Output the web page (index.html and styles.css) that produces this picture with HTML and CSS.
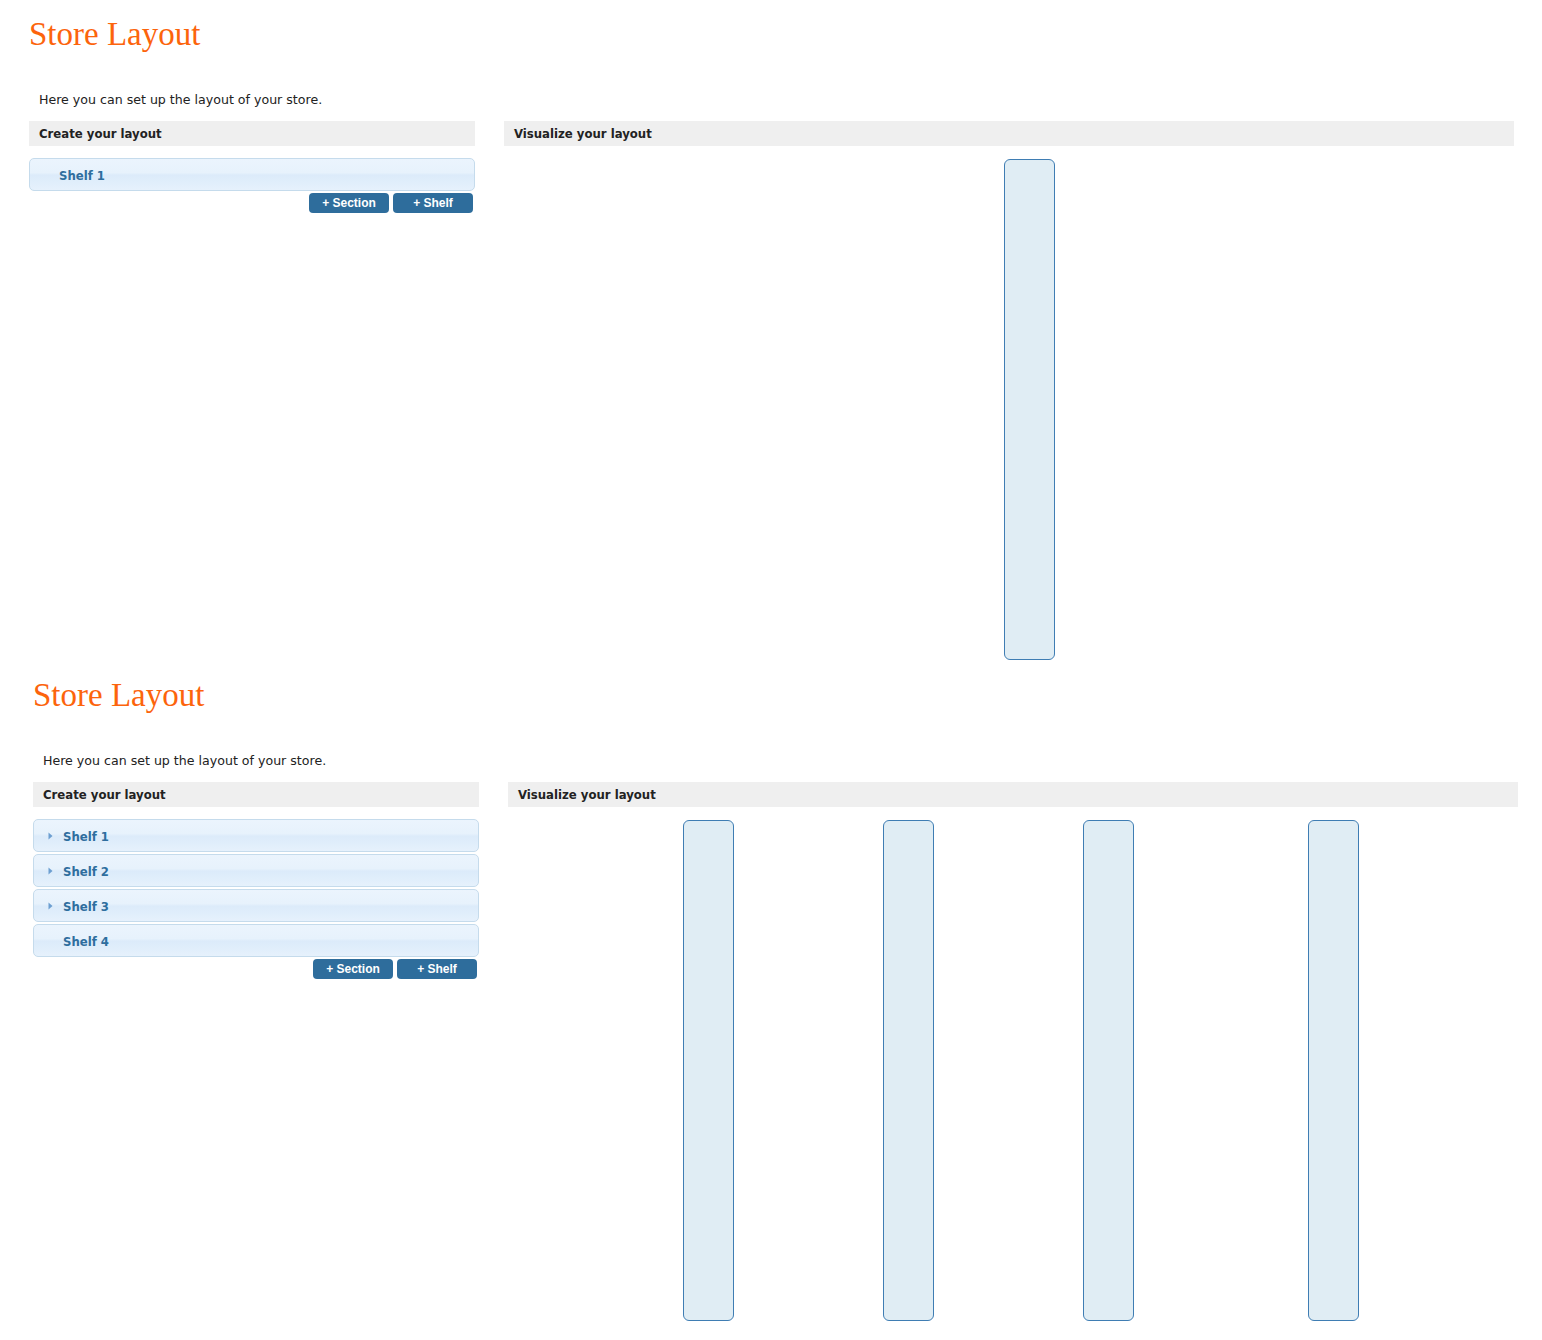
FILE: index.html
```html
<!DOCTYPE html>
<html>
<head>
<meta charset="utf-8">
<title>Store Layout</title>
<link rel="stylesheet" href="styles.css">
</head>
<body>
<section class="frame">
  <h1 class="title">Store Layout</h1>
  <p class="intro">Here you can set up the layout of your store.</p>
  <div class="columns">
    <div class="col-create">
      <div class="bar">Create your layout</div>
      <ul class="shelves">
        <li class="shelf"><span class="arrow-space"></span><span class="shelf-name">Shelf 1</span></li>
      </ul>
      <div class="actions">
        <button class="btn">+ Section</button>
        <button class="btn">+ Shelf</button>
      </div>
    </div>
    <div class="col-viz">
      <div class="bar">Visualize your layout</div>
      <div class="canvas">
        <div class="rack" style="left:500px"></div>
      </div>
    </div>
  </div>
</section>
<section class="frame frame-b">
  <h1 class="title">Store Layout</h1>
  <p class="intro">Here you can set up the layout of your store.</p>
  <div class="columns">
    <div class="col-create">
      <div class="bar">Create your layout</div>
      <ul class="shelves">
        <li class="shelf"><svg class="arrow" width="5" height="8" viewBox="0 0 5 8"><path d="M0.5 0.5 L4.5 4 L0.5 7.5 Z" fill="#6d9fd1"/></svg><span class="shelf-name">Shelf 1</span></li>
        <li class="shelf"><svg class="arrow" width="5" height="8" viewBox="0 0 5 8"><path d="M0.5 0.5 L4.5 4 L0.5 7.5 Z" fill="#6d9fd1"/></svg><span class="shelf-name">Shelf 2</span></li>
        <li class="shelf"><svg class="arrow" width="5" height="8" viewBox="0 0 5 8"><path d="M0.5 0.5 L4.5 4 L0.5 7.5 Z" fill="#6d9fd1"/></svg><span class="shelf-name">Shelf 3</span></li>
        <li class="shelf"><span class="arrow-space"></span><span class="shelf-name">Shelf 4</span></li>
      </ul>
      <div class="actions">
        <button class="btn">+ Section</button>
        <button class="btn">+ Shelf</button>
      </div>
    </div>
    <div class="col-viz">
      <div class="bar">Visualize your layout</div>
      <div class="canvas">
        <div class="rack" style="left:175px"></div>
        <div class="rack" style="left:375px"></div>
        <div class="rack" style="left:575px"></div>
        <div class="rack" style="left:800px"></div>
      </div>
    </div>
  </div>
</section>
</body>
</html>
```

FILE: styles.css
```css
html, body {
  margin: 0;
  padding: 0;
  background: #ffffff;
}

body {
  font-family: "DejaVu Sans", Verdana, sans-serif;
  color: #222222;
}

.frame {
  padding: 0 28px 0 29px;
  width: 1485px;
}

.frame-b {
  padding-left: 33px;
}

.title {
  margin: 15px 0 0 0;
  font-family: "Liberation Serif", "Times New Roman", serif;
  font-weight: normal;
  font-size: 33px;
  line-height: 38px;
  color: #fc640c;
}

.intro {
  margin: 39px 0 0 0;
  padding-left: 10px;
  font-size: 12.6px;
  line-height: 16px;
  color: #222222;
}

.columns {
  display: flex;
  gap: 29px;
  margin-top: 13px;
  align-items: flex-start;
}

.col-create {
  width: 446px;
  flex: none;
}

.col-viz {
  width: 1010px;
  flex: none;
}

.bar {
  height: 25px;
  line-height: 25px;
  background: #efefef;
  padding-left: 10px;
  font-family: "DejaVu Sans Condensed", "DejaVu Sans", sans-serif;
  font-stretch: semi-condensed;
  font-weight: bold;
  font-size: 13px;
  color: #222222;
}

.shelves {
  list-style: none;
  margin: 12px 0 0 0;
  padding: 0;
}

.shelf {
  box-sizing: border-box;
  height: 33px;
  margin-bottom: 2px;
  border: 1px solid #c5dbec;
  border-radius: 5px;
  background: linear-gradient(to bottom, #ebf4fd 0%, #e7f2fc 44%, #dcebfa 52%, #e0eefb 75%, #e6f1fc 100%);
  display: flex;
  align-items: center;
  padding-left: 14px;
  padding-top: 2px;
}

.arrow {
  display: block;
  width: 5px;
  height: 8px;
  margin-right: 10px;
  margin-top: -1px;
  flex: none;
}

.arrow-space {
  display: block;
  width: 5px;
  margin-right: 10px;
  flex: none;
}

.shelf-name {
  font-family: "DejaVu Sans Condensed", "DejaVu Sans", sans-serif;
  font-stretch: semi-condensed;
  font-weight: bold;
  font-size: 13px;
  color: #2e6e9e;
  line-height: 16px;
}

.actions {
  display: flex;
  justify-content: flex-end;
  gap: 4px;
  padding-right: 2px;
}

.btn {
  width: 80px;
  height: 20px;
  margin: 0;
  padding: 0;
  border: none;
  border-radius: 4px;
  background: #2e6d9c;
  color: #ffffff;
  font-family: "Liberation Sans", Arial, sans-serif;
  font-weight: bold;
  font-size: 12px;
  line-height: 20px;
  text-align: center;
}

.canvas {
  position: relative;
  height: 502px;
  margin-top: 13px;
}

.rack {
  position: absolute;
  top: 0;
  box-sizing: border-box;
  width: 51px;
  height: 501px;
  background: #e0edf4;
  border: 1px solid #3f7db3;
  border-radius: 6px;
}
```
